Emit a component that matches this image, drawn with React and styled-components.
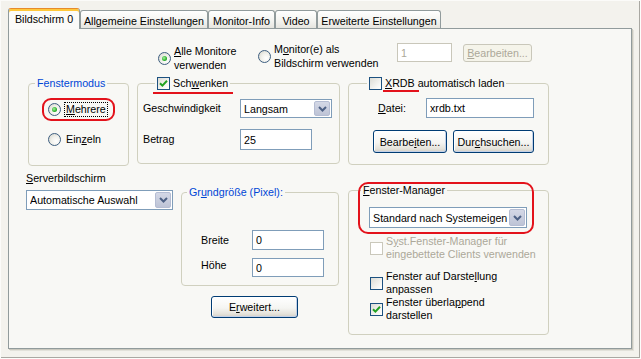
import styled, { createGlobalStyle } from 'styled-components'

const GlobalStyle = createGlobalStyle`
  html, body {
    margin: 0;
    padding: 0;
  }

  body {
    font-family: "Liberation Sans", Arial, sans-serif;
    font-size: 10.7px;
    color: #000000;
  }

  * {
    box-sizing: border-box;
  }
`

const RED = '#e3121b'

const Window = styled.div`
  width: 641px;
  height: 359px;
  padding-top: 8px;
  background: #f3f2ed;
  box-shadow:
    inset 1px 1px 0 #fbfbf9,
    inset -1px -1px 0 #fdfdfb,
    inset -2px -2px 0 #a9a8a2;
  overflow: hidden;
`

const TabBar = styled.div`
  position: relative;
  z-index: 1;
  display: flex;
  align-items: flex-end;
  height: 20px;
  padding-left: 8px;
`

const Tab = styled.div`
  flex: none;
  display: flex;
  align-items: center;
  justify-content: center;
  width: ${({ $w }) => $w}px;
  height: ${({ $active }) => ($active ? 21 : 18)}px;
  margin-bottom: ${({ $active }) => ($active ? -1 : 0)}px;
  padding-top: ${({ $active }) => ($active ? 0 : 2)}px;
  border: 1px solid #919b9c;
  border-bottom: none;
  border-top-color: ${({ $active }) => ($active ? '#e68b2c' : '#919b9c')};
  border-radius: 3px 3px 0 0;
  background: ${({ $active }) =>
    $active ? '#fbfbf9' : 'linear-gradient(#ffffff, #f3f3ef 60%, #e6e5df)'};
  box-shadow: ${({ $active }) => ($active ? 'inset 0 2px 0 #ffc83c' : 'none')};
  white-space: nowrap;
`

const Panel = styled.div`
  display: flex;
  flex-direction: column;
  width: 624px;
  height: 321px;
  margin-left: 8px;
  padding: 13px 0 0 17px;
  border: 1px solid #919b9c;
  background: #f8f8f5;
  box-shadow: 1px 1px 0 #c9c8be, 2px 2px 0 #e2e1da;
`

const U = styled.span`
  text-decoration: underline;
  text-underline-offset: 1px;
`

const TopRow = styled.div`
  display: flex;
  align-items: flex-start;
  height: 30px;
  padding-left: 132px;
`

const Option = styled.div`
  flex: none;
  display: flex;
  align-items: center;
  gap: 3px;
  width: ${({ $w }) => ($w ? `${$w}px` : 'auto')};
  margin-top: ${({ $top }) => $top || 0}px;
  margin-left: ${({ $left }) => $left || 0}px;
  color: ${({ $disabled }) => ($disabled ? '#aca899' : '#000000')};
`

const TwoLine = styled.span`
  line-height: 14px;
  white-space: nowrap;
`

const Text = styled.span`
  line-height: 13px;
  white-space: nowrap;
`

const Focus = styled.span`
  padding: 0 1px;
  line-height: 13px;
  border: 1px dotted ${({ $show }) => ($show ? '#000000' : 'transparent')};
  white-space: nowrap;
`

const RadioDot = styled.span`
  position: relative;
  flex: none;
  width: 13px;
  height: 13px;
  border: 1px solid #3d5e80;
  border-radius: 50%;
  background: radial-gradient(circle at 65% 65%, #ffffff 0, #f1f1ec 45%, #d2d2c8 100%);

  &::after {
    content: '';
    display: ${({ $checked }) => ($checked ? 'block' : 'none')};
    position: absolute;
    left: 3px;
    top: 3px;
    width: 5px;
    height: 5px;
    border-radius: 50%;
    background: radial-gradient(circle at 40% 40%, #a8f0a0, #2bb02b 60%, #1d8a1d);
  }
`

const Box = styled.span`
  flex: none;
  display: flex;
  align-items: center;
  justify-content: center;
  width: 13px;
  height: 13px;
  border: 1px solid ${({ $disabled }) => ($disabled ? '#cac8bb' : '#1c5180')};
  background: ${({ $disabled }) =>
    $disabled ? '#ffffff' : 'linear-gradient(135deg, #dcdcd5, #f7f7f4 70%, #ffffff)'};
`

function CheckBox({ checked, disabled }) {
  return (
    <Box $disabled={disabled}>
      {checked && (
        <svg width="9" height="9" viewBox="0 0 9 9">
          <path d="M1 4.2 L3.4 6.6 L8 1.8" fill="none" stroke="#21a121" strokeWidth="2" />
        </svg>
      )}
    </Box>
  )
}

const TextInput = styled.input`
  flex: none;
  width: ${({ $w }) => $w}px;
  height: ${({ $h }) => $h}px;
  margin: ${({ $top }) => $top || 0}px 0 0 ${({ $left }) => $left || 0}px;
  padding: 0 0 0 3px;
  border: 1px solid ${({ disabled }) => (disabled ? '#c9c7ba' : '#7f9db9')};
  background: #ffffff;
  color: ${({ disabled }) => (disabled ? '#aca899' : '#000000')};
  font: inherit;
  outline: none;
`

const Button = styled.button`
  flex: none;
  width: ${({ $w }) => $w}px;
  height: ${({ $h }) => $h}px;
  margin: ${({ $top }) => $top || 0}px 0 0 ${({ $left }) => $left || 0}px;
  padding: 0;
  border: 1px solid ${({ disabled }) => (disabled ? '#c9c7ba' : '#003c74')};
  border-radius: 3px;
  background: ${({ disabled }) =>
    disabled ? '#f5f4ea' : 'linear-gradient(#ffffff, #f5f5f2 55%, #e4e2da 85%, #d3cec4)'};
  box-shadow: ${({ disabled }) =>
    disabled ? 'none' : 'inset 1px 1px 0 #ffffff, inset -1px -1px 0 #c3d1e8'};
  color: ${({ disabled }) => (disabled ? '#aca899' : '#000000')};
  font: inherit;
  white-space: nowrap;
`

const SelectBox = styled.div`
  flex: none;
  display: flex;
  align-items: center;
  width: ${({ $w }) => $w}px;
  height: ${({ $h }) => $h}px;
  padding-left: 3px;
  border: 1px solid #7f9db9;
  background: #ffffff;
`

const SelectText = styled.span`
  flex: 1;
  overflow: hidden;
  white-space: nowrap;
`

const DropButton = styled.span`
  flex: none;
  display: flex;
  align-items: center;
  justify-content: center;
  align-self: stretch;
  width: 16px;
  margin: 1px;
  border: 1px solid #b5bdd3;
  border-radius: 2px;
  background: linear-gradient(#d4d8e6, #bec4d6);
`

function Select({ w, h, children }) {
  return (
    <SelectBox $w={w} $h={h}>
      <SelectText>{children}</SelectText>
      <DropButton>
        <svg width="9" height="6" viewBox="0 0 9 6">
          <path d="M1 1 L4.5 4.5 L8 1" fill="none" stroke="#4d6185" strokeWidth="2" />
        </svg>
      </DropButton>
    </SelectBox>
  )
}

const GroupRow = styled.div`
  display: flex;
  align-items: flex-start;
  gap: 8px;
  margin-top: 5px;
  padding-left: 2px;
`

const GroupBox = styled.fieldset`
  flex: none;
  min-width: 0;
  width: ${({ $w }) => $w}px;
  height: ${({ $h }) => $h}px;
  margin: 0;
  padding: 0;
  border: 1px solid #d0d0bf;
  border-radius: 4px;
`

const Legend = styled.legend`
  margin-left: ${({ $x }) => $x}px;
  padding: 0 2px;
  line-height: 13px;
  color: ${({ $blue }) => ($blue ? '#0046d5' : '#000000')};
  white-space: nowrap;
`

const LegendRow = styled.span`
  position: relative;
  display: inline-flex;
  align-items: center;
  gap: 3px;
  height: 13px;
  vertical-align: top;
`

const RedMark = styled.span`
  position: absolute;
  left: ${({ $left }) => $left}px;
  top: ${({ $top }) => $top}px;
  width: ${({ $w }) => $w}px;
  height: 2px;
  background: ${RED};
`

const ModeBody = styled.div`
  display: flex;
  flex-direction: column;
  align-items: flex-start;
  padding: 8px 0 0 13px;
`

const Highlight = styled.div`
  display: flex;
  padding: 2px 5px 2px 4px;
  border: 2px solid ${RED};
  border-radius: 9px;
`

const FormGrid = styled.div`
  display: grid;
  grid-template-columns: ${({ $cols }) => $cols};
  row-gap: ${({ $gap }) => $gap || 0}px;
  align-items: center;
  padding: ${({ $pad }) => $pad};
`

const Label = styled.span`
  line-height: 13px;
  white-space: nowrap;
  margin-top: ${({ $top }) => $top || 0}px;
`

const XrdbBody = styled.div`
  display: flex;
  flex-direction: column;
  padding: 8px 0 0 24px;
`

const ButtonRow = styled.div`
  display: flex;
  gap: 6px;
  margin-top: 12px;
`

const BottomRow = styled.div`
  display: flex;
  align-items: flex-start;
  gap: 9px;
`

const LeftArea = styled.div`
  display: grid;
  grid-template-columns: 155px 158px;
  align-items: start;
`

const ServerColumn = styled.div`
  display: flex;
  flex-direction: column;
  align-items: flex-start;
  gap: 5px;
  padding-top: 6px;
`

const SizeColumn = styled.div`
  display: flex;
  flex-direction: column;
  align-items: flex-start;
  padding-top: 20px;
`

const ManagerWrap = styled.div`
  position: relative;
  padding-top: 18px;
`

const ManagerBody = styled.div`
  display: flex;
  flex-direction: column;
  align-items: flex-start;
  padding: 10px 0 0 20px;
`

const RedFrame = styled.div`
  position: absolute;
  left: 10px;
  top: 16px;
  width: 176px;
  height: 52px;
  border: 2px solid ${RED};
  border-radius: 10px;
  pointer-events: none;
`

const tabs = [
  { label: 'Bildschirm 0', w: 72, active: true },
  { label: 'Allgemeine Einstellungen', w: 128 },
  { label: 'Monitor-Info', w: 67 },
  { label: 'Video', w: 42 },
  { label: 'Erweiterte Einstellungen', w: 124 },
]

export default function App() {
  return (
    <>
      <GlobalStyle />
      <Window>
        <TabBar>
          {tabs.map((tab) => (
            <Tab key={tab.label} $w={tab.w} $active={tab.active}>
              {tab.label}
            </Tab>
          ))}
        </TabBar>

        <Panel>
          <TopRow>
            <Option $w={100} $top={2}>
              <RadioDot $checked />
              <TwoLine>
                <U>A</U>lle Monitore
                <br />
                verwenden
              </TwoLine>
            </Option>
            <Option $w={139}>
              <RadioDot />
              <TwoLine>
                M<U>o</U>nitor(e) als
                <br />
                Bildschirm verwenden
              </TwoLine>
            </Option>
            <TextInput disabled readOnly value="1" $w={55} $h={19} $top={1} />
            <Button disabled $w={69} $h={18} $top={2} $left={11}>
              <U>B</U>earbeiten...
            </Button>
          </TopRow>

          <GroupRow>
            <GroupBox $w={101} $h={89}>
              <Legend $x={6} $blue>
                Fenstermodus
              </Legend>
              <ModeBody>
                <Highlight>
                  <Option>
                    <RadioDot $checked />
                    <Focus $show>
                      <U>M</U>ehrere
                    </Focus>
                  </Option>
                </Highlight>
                <Option $top={11} $left={6}>
                  <RadioDot />
                  <Focus>
                    Ein<U>z</U>eln
                  </Focus>
                </Option>
              </ModeBody>
            </GroupBox>

            <GroupBox $w={203} $h={87}>
              <Legend $x={17}>
                <LegendRow>
                  <CheckBox checked />
                  <Text>
                    Sch<U>w</U>enken
                  </Text>
                  <RedMark $left={-4} $top={15} $w={80} />
                </LegendRow>
              </Legend>
              <FormGrid $cols="97px 92px" $gap={11} $pad="9px 0 0 5px">
                <Label>Geschwindigkeit</Label>
                <Select w={92} h={19}>
                  Langsam
                </Select>
                <Label>Betrag</Label>
                <TextInput readOnly value="25" $w={72} $h={21} />
              </FormGrid>
            </GroupBox>

            <GroupBox $w={201} $h={88}>
              <Legend $x={18}>
                <LegendRow>
                  <CheckBox />
                  <Text>
                    <U>X</U>RDB automatisch laden
                  </Text>
                  <RedMark $left={14} $top={13} $w={36} />
                </LegendRow>
              </Legend>
              <XrdbBody>
                <FormGrid $cols="48px 108px" $pad="0 0 0 5px">
                  <Label>
                    <U>D</U>atei:
                  </Label>
                  <TextInput readOnly value="xrdb.txt" $w={108} $h={20} />
                </FormGrid>
                <ButtonRow>
                  <Button $w={74} $h={23}>
                    Bearbe<U>i</U>ten...
                  </Button>
                  <Button $w={81} $h={23}>
                    Dur<U>c</U>hsuchen...
                  </Button>
                </ButtonRow>
              </XrdbBody>
            </GroupBox>
          </GroupRow>

          <BottomRow>
            <LeftArea>
              <ServerColumn>
                <Label>
                  <U>S</U>erverbildschirm
                </Label>
                <Select w={147} h={20}>
                  Automatische Auswahl
                </Select>
              </ServerColumn>

              <SizeColumn>
                <GroupBox $w={158} $h={100}>
                  <Legend $x={5} $blue>
                    Gr<U>u</U>ndgröße (Pixel):
                  </Legend>
                  <FormGrid $cols="51px 72px" $gap={8} $pad="31px 0 0 19px">
                    <Label>Breite</Label>
                    <TextInput readOnly value="0" $w={72} $h={20} />
                    <Label $top={-4}>Höhe</Label>
                    <TextInput readOnly value="0" $w={72} $h={19} />
                  </FormGrid>
                </GroupBox>
                <Button $w={87} $h={22} $top={10} $left={30}>
                  E<U>r</U>weitert...
                </Button>
              </SizeColumn>
            </LeftArea>

            <ManagerWrap>
              <GroupBox $w={201} $h={151}>
                <Legend $x={12}>
                  <U>F</U>enster-Manager
                </Legend>
                <ManagerBody>
                  <Select w={158} h={21}>
                    Standard nach Systemeigen
                  </Select>
                  <Option $top={7} $left={1} $disabled>
                    <CheckBox disabled />
                    <Text>
                      S<U>y</U>st.Fenster-Manager für
                      <br />
                      eingebettete Clients verwenden
                    </Text>
                  </Option>
                  <Option $top={9} $left={1}>
                    <CheckBox />
                    <Text>
                      Fenster auf Darste<U>l</U>lung
                      <br />
                      anpassen
                    </Text>
                  </Option>
                  <Option $left={1}>
                    <CheckBox checked />
                    <Text>
                      Fenster überla<U>p</U>pend
                      <br />
                      darstellen
                    </Text>
                  </Option>
                </ManagerBody>
              </GroupBox>
              <RedFrame />
            </ManagerWrap>
          </BottomRow>
        </Panel>
      </Window>
    </>
  )
}
